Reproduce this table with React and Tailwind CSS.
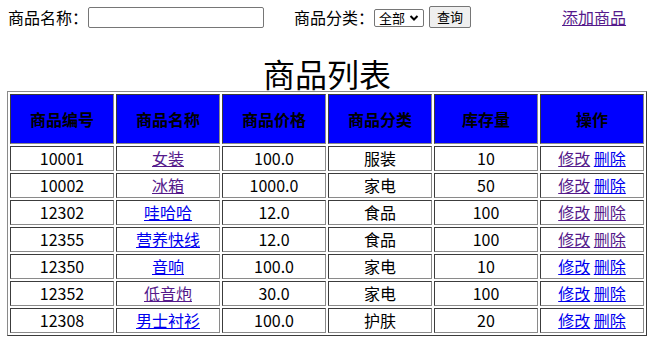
import React from "react";

const V = "text-[#551A8B]";
const B = "text-[#0000EE]";

const rows = [
  { id: "10001", name: "女装", nc: V, price: "100.0", cat: "服装", stock: "10", e: V, d: B },
  { id: "10002", name: "冰箱", nc: V, price: "1000.0", cat: "家电", stock: "50", e: V, d: B },
  { id: "12302", name: "哇哈哈", nc: B, price: "12.0", cat: "食品", stock: "100", e: V, d: V },
  { id: "12355", name: "营养快线", nc: B, price: "12.0", cat: "食品", stock: "100", e: V, d: V },
  { id: "12350", name: "音响", nc: B, price: "100.0", cat: "家电", stock: "10", e: B, d: B },
  { id: "12352", name: "低音炮", nc: V, price: "30.0", cat: "家电", stock: "100", e: B, d: B },
  { id: "12308", name: "男士衬衫", nc: B, price: "100.0", cat: "护肤", stock: "20", e: B, d: B },
];

const heads = ["商品编号", "商品名称", "商品价格", "商品分类", "库存量", "操作"];

const cellBorder =
  "border border-t-[#3c3c3c] border-l-[#3c3c3c] border-b-[#8a8a8a] border-r-[#8a8a8a] p-[1px] text-center";
const td = cellBorder + " leading-[21px] text-[16px] text-black";

export default function App() {
  return (
    <div className="w-[654px] h-[348px] bg-white font-['Noto_Sans_CJK_SC',sans-serif] text-black text-[16px]">
      <div className="flex items-center h-[24px] mt-[5px] pl-[8px]">
        <span className="leading-[21px]">商品名称：</span>
        <input type="text" className="w-[176px] h-[21px] border border-[#767676] rounded-[2px] bg-white outline-none" />
        <span className="ml-[30px] leading-[21px]">商品分类：</span>
        <div className="flex items-center justify-between w-[50px] h-[18px] mt-[1px] border border-[#767676] rounded-[2px] bg-white pl-[4px] pr-[4px]">
          <span className="text-[13px] leading-[16px]">全部</span>
          <svg width="10" height="8" viewBox="0 0 10 8">
            <path d="M1.5 2 L5 5.5 L8.5 2" fill="none" stroke="#000" strokeWidth="2" />
          </svg>
        </div>
        <button className="ml-[5px] w-[42px] h-[22px] -mt-[1px] border border-[#767676] rounded-[2px] bg-[#efefef] text-[13px] leading-[16px] text-black">
          查询
        </button>
        <a href="#" className="ml-[91px] leading-[21px] underline text-[#551A8B]">添加商品</a>
      </div>
      <div className="mt-[26px] h-[36px] text-[32px] leading-[36px] text-center">商品列表</div>
      <table className="w-[640px] mx-auto table-fixed border-separate border-spacing-[2px] border border-t-[#8a8a8a] border-l-[#8a8a8a] border-b-[#3c3c3c] border-r-[#3c3c3c]">
        <thead>
          <tr>
            {heads.map((h) => (
              <th key={h} className={cellBorder + " h-[50px] bg-[#0000ff] text-black font-bold text-[16px] leading-[21px]"}>
                {h}
              </th>
            ))}
          </tr>
        </thead>
        <tbody>
          {rows.map((r) => (
            <tr key={r.id}>
              <td className={td}>{r.id}</td>
              <td className={td}>
                <a href="#" className={"underline " + r.nc}>{r.name}</a>
              </td>
              <td className={td}>{r.price}</td>
              <td className={td}>{r.cat}</td>
              <td className={td}>{r.stock}</td>
              <td className={td}>
                <a href="#" className={"underline " + r.e}>修改</a>{" "}
                <a href="#" className={"underline " + r.d}>删除</a>
              </td>
            </tr>
          ))}
        </tbody>
      </table>
    </div>
  );
}
